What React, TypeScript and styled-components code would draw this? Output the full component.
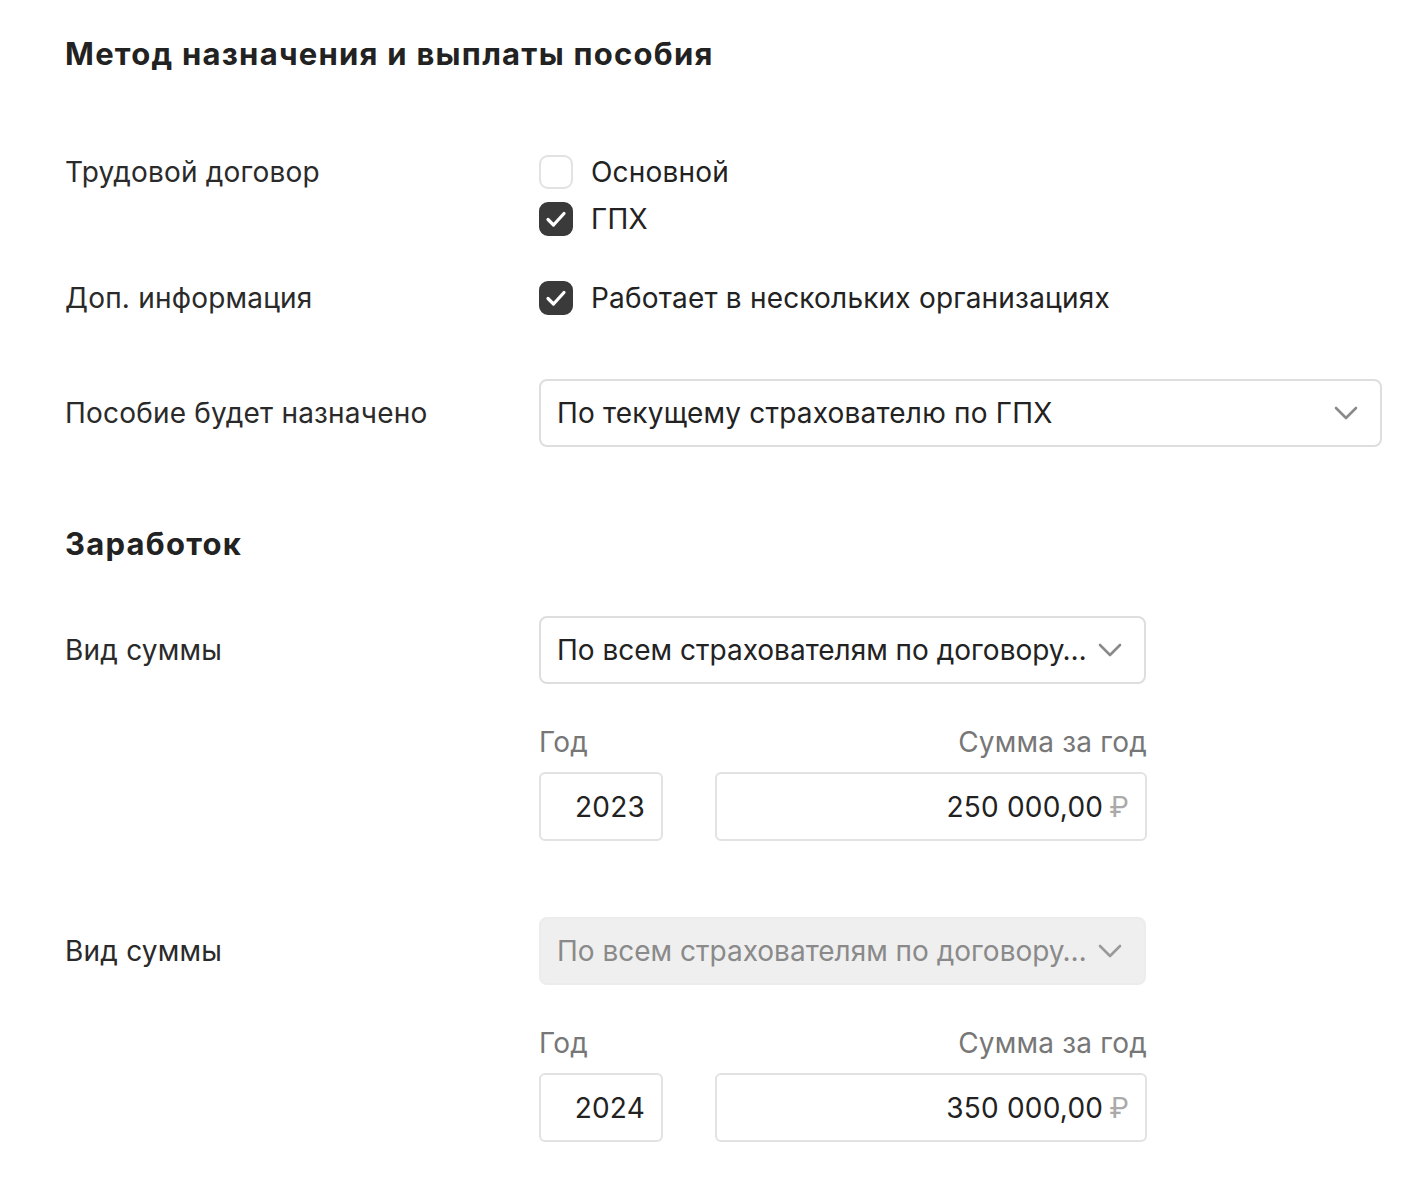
import React from "react";
import styled, { createGlobalStyle } from "styled-components";

const GlobalStyle = createGlobalStyle`
  html, body {
    margin: 0;
    padding: 0;
    background: #ffffff;
  }
  body {
    font-family: Inter, "Noto Sans", "Liberation Sans", sans-serif;
    color: #222222;
    letter-spacing: 0.2px;
  }
`;

const Page = styled.div`
  padding: 36px 36px 40px 65px;
  display: flex;
  flex-direction: column;
`;

const Heading = styled.h2<{ $top?: number }>`
  margin: ${(p) => p.$top ?? 0}px 0 0 0;
  font-size: 31px;
  line-height: 36px;
  font-weight: 700;
  letter-spacing: 1.25px;
  color: #222;
`;

const Row = styled.div<{ $top: number }>`
  display: grid;
  grid-template-columns: 474px 1fr;
  align-items: start;
  margin-top: ${(p) => p.$top}px;
`;

const Label = styled.div<{ $h: number }>`
  display: flex;
  align-items: center;
  min-height: ${(p) => p.$h}px;
  font-size: 28px;
  color: #2a2a2a;
`;

const Stack = styled.div`
  display: flex;
  flex-direction: column;
  gap: 13px;
`;

const CheckRow = styled.label`
  display: flex;
  align-items: center;
  gap: 18px;
  font-size: 28px;
  color: #222;
  height: 34px;
`;

const Box = styled.span<{ $checked?: boolean }>`
  width: 34px;
  height: 34px;
  box-sizing: border-box;
  border-radius: 9px;
  border: 2px solid ${(p) => (p.$checked ? "#3a3a3a" : "#e2e2e2")};
  background: ${(p) => (p.$checked ? "#3a3a3a" : "#fff")};
  display: flex;
  align-items: center;
  justify-content: center;
  flex: none;
`;

const Select = styled.div<{ $width?: number; $disabled?: boolean }>`
  box-sizing: border-box;
  width: ${(p) => (p.$width ? `${p.$width}px` : "100%")};
  height: 68px;
  border: 2px solid ${(p) => (p.$disabled ? "#ececec" : "#dedede")};
  border-radius: 8px;
  background: ${(p) => (p.$disabled ? "#efefef" : "#fff")};
  color: ${(p) => (p.$disabled ? "#8a8a8a" : "#222")};
  display: flex;
  align-items: center;
  padding: 0 22px 0 16px;
  gap: 12px;
  font-size: 28px;
  letter-spacing: ${(p) => (p.$width ? "0" : "0.2px")};

  svg {
    flex: none;
  }
`;

const SelectText = styled.span`
  flex: 1;
  min-width: 0;
  white-space: nowrap;
  overflow: hidden;
`;

const Amounts = styled.div`
  display: grid;
  grid-template-columns: 124px 432px;
  column-gap: 52px;
  row-gap: 14px;
  margin-top: 42px;
  width: 608px;
`;

const SmallLabel = styled.div<{ $right?: boolean }>`
  font-size: 28px;
  line-height: 32px;
  color: #777;
  text-align: ${(p) => (p.$right ? "right" : "left")};
`;

const Input = styled.div`
  box-sizing: border-box;
  height: 69px;
  border: 2px solid #e2e2e2;
  border-radius: 6px;
  background: #fff;
  display: flex;
  align-items: center;
  justify-content: flex-end;
  padding: 0 16px;
  font-size: 28px;
  color: #222;
  gap: 6px;
`;

const Currency = styled.span`
  color: #aaa;
`;

const Chevron = ({ color }: { color: string }) => (
  <svg width="24" height="14" viewBox="0 0 24 14" fill="none">
    <path d="M2 2l10 10L22 2" stroke={color} strokeWidth="2.6" strokeLinecap="round" strokeLinejoin="round" />
  </svg>
);

const Check = () => (
  <svg width="22" height="18" viewBox="0 0 22 18" fill="none">
    <path d="M3 9.5l5.5 5.5L19 3.5" stroke="#fff" strokeWidth="3.2" strokeLinecap="round" strokeLinejoin="round" />
  </svg>
);

const Checkbox = ({ checked, children }: { checked?: boolean; children: React.ReactNode }) => (
  <CheckRow>
    <Box $checked={checked}>{checked && <Check />}</Box>
    {children}
  </CheckRow>
);

const AmountBlock = ({ year, sum }: { year: string; sum: string }) => (
  <Amounts>
    <SmallLabel>Год</SmallLabel>
    <SmallLabel $right>Сумма за год</SmallLabel>
    <Input>{year}</Input>
    <Input>
      {sum}
      <Currency>₽</Currency>
    </Input>
  </Amounts>
);

export default function App() {
  return (
    <Page>
      <GlobalStyle />
      <Heading>Метод назначения и выплаты пособия</Heading>

      <Row $top={83}>
        <Label $h={34}>Трудовой договор</Label>
        <Stack>
          <Checkbox>Основной</Checkbox>
          <Checkbox checked>ГПХ</Checkbox>
        </Stack>
      </Row>

      <Row $top={45}>
        <Label $h={34}>Доп. информация</Label>
        <Checkbox checked>Работает в нескольких организациях</Checkbox>
      </Row>

      <Row $top={64}>
        <Label $h={68}>Пособие будет назначено</Label>
        <Select>
          <SelectText>По текущему страхователю по ГПХ</SelectText>
          <Chevron color="#8a8a8a" />
        </Select>
      </Row>

      <Heading $top={79}>Заработок</Heading>

      <Row $top={54}>
        <Label $h={68}>Вид суммы</Label>
        <div>
          <Select $width={607}>
            <SelectText>По всем страхователям по договору…</SelectText>
            <Chevron color="#8a8a8a" />
          </Select>
          <AmountBlock year="2023" sum="250 000,00" />
        </div>
      </Row>

      <Row $top={76}>
        <Label $h={68}>Вид суммы</Label>
        <div>
          <Select $width={607} $disabled>
            <SelectText>По всем страхователям по договору…</SelectText>
            <Chevron color="#9a9a9a" />
          </Select>
          <AmountBlock year="2024" sum="350 000,00" />
        </div>
      </Row>
    </Page>
  );
}
